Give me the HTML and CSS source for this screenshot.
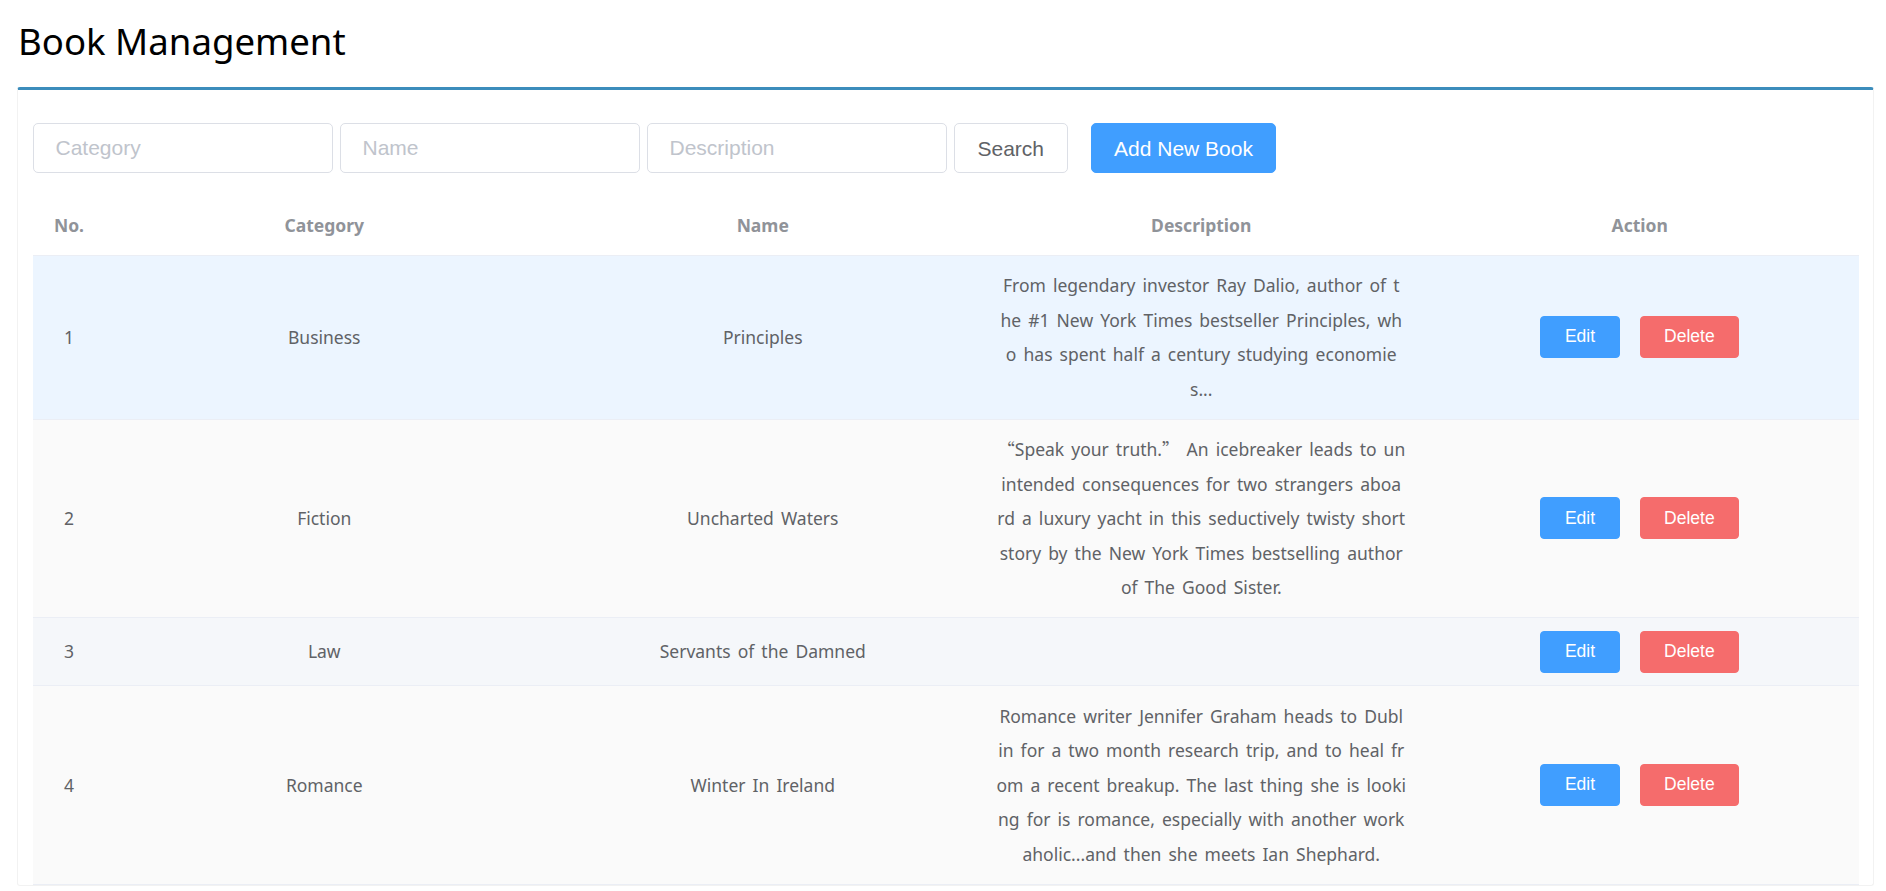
FILE: index.html
```html
<!DOCTYPE html>
<html lang="en">
<head>
<meta charset="utf-8">
<title>Book Management</title>
<link rel="stylesheet" href="styles.css">
</head>
<body>
<div class="page">
  <h1 class="title">Book Management</h1>
  <section class="card">
    <form class="toolbar" onsubmit="return false">
      <input class="field" type="text" placeholder="Category">
      <input class="field" type="text" placeholder="Name">
      <input class="field" type="text" placeholder="Description">
      <button class="btn btn-default" type="button">Search</button>
      <button class="btn btn-primary btn-add" type="button">Add New Book</button>
    </form>
    <table class="books">
      <colgroup>
        <col class="col-no">
        <col><col><col><col>
      </colgroup>
      <thead>
        <tr>
          <th>No.</th>
          <th>Category</th>
          <th>Name</th>
          <th>Description</th>
          <th>Action</th>
        </tr>
      </thead>
      <tbody>
        <tr class="row-current">
          <td>1</td>
          <td>Business</td>
          <td>Principles</td>
          <td class="desc">From legendary investor Ray Dalio, author of t<br>he #1 New York Times bestseller Principles, wh<br>o has spent half a century studying economie<br>s...</td>
          <td><div class="actions"><button class="sbtn sbtn-edit" type="button">Edit</button><button class="sbtn sbtn-del" type="button">Delete</button></div></td>
        </tr>
        <tr class="row-striped">
          <td>2</td>
          <td>Fiction</td>
          <td>Uncharted Waters</td>
          <td class="desc"><span class="cjk">“</span>Speak your truth.<span class="cjk">”</span> An icebreaker leads to un<br>intended consequences for two strangers aboa<br>rd a luxury yacht in this seductively twisty short<br>story by the New York Times bestselling author<br>of The Good Sister.</td>
          <td><div class="actions"><button class="sbtn sbtn-edit" type="button">Edit</button><button class="sbtn sbtn-del" type="button">Delete</button></div></td>
        </tr>
        <tr class="row-hover">
          <td>3</td>
          <td>Law</td>
          <td>Servants of the Damned</td>
          <td class="desc"></td>
          <td><div class="actions"><button class="sbtn sbtn-edit" type="button">Edit</button><button class="sbtn sbtn-del" type="button">Delete</button></div></td>
        </tr>
        <tr class="row-striped">
          <td>4</td>
          <td>Romance</td>
          <td>Winter In Ireland</td>
          <td class="desc">Romance writer Jennifer Graham heads to Dubl<br>in for a two month research trip, and to heal fr<br>om a recent breakup. The last thing she is looki<br>ng for is romance, especially with another work<br>aholic...and then she meets Ian Shephard.</td>
          <td><div class="actions"><button class="sbtn sbtn-edit" type="button">Edit</button><button class="sbtn sbtn-del" type="button">Delete</button></div></td>
        </tr>
      </tbody>
    </table>
  </section>
</div>
</body>
</html>
```

FILE: styles.css
```css
html, body {
  margin: 0;
  padding: 0;
  background: #ffffff;
}

.page {
  padding: 18.5px 12px 0 17px;
  font-family: "Noto Sans", "Noto Sans CJK SC", sans-serif;
}

.title {
  margin: 0 0 24.5px 1px;
  font-size: 36.6px;
  line-height: 44px;
  font-weight: 400;
  color: #000000;
}

.card {
  border: 1px solid #f2f2f2;
  border-top: 3px solid #3c8dbc;
  border-radius: 3px;
  padding: 33px 14px 0 15px;
  background: #ffffff;
}

.toolbar {
  display: flex;
  align-items: center;
  gap: 7px;
  margin: 0 0 22px 0;
}

.field {
  box-sizing: border-box;
  width: 300px;
  height: 50px;
  padding: 0 21.5px;
  border: 1px solid #dcdfe6;
  border-radius: 5px;
  font-family: "Liberation Sans", Arial, sans-serif;
  font-size: 21px;
  color: #606266;
  outline: none;
  background: #fff;
}

.field::placeholder {
  color: #c0c4cc;
}

.btn {
  box-sizing: border-box;
  height: 50px;
  padding: 0 22.5px;
  border-radius: 5px;
  border: 1px solid #dcdfe6;
  font-family: "Liberation Sans", Arial, sans-serif;
  font-size: 21px;
  line-height: 1;
  cursor: pointer;
}

.btn-default {
  background: #ffffff;
  color: #606266;
}

.btn-primary {
  background: #409eff;
  border-color: #409eff;
  color: #ffffff;
}

.btn-add {
  margin-left: 16px;
}

.books {
  width: 100%;
  table-layout: fixed;
  border-collapse: collapse;
  font-size: 17.5px;
  line-height: 34.5px;
  word-spacing: 2.5px;
  color: #606266;
}

.col-no {
  width: 72px;
}

.books th,
.books td {
  padding: 12.5px 12.5px;
  text-align: center;
  vertical-align: middle;
  border-bottom: 1px solid #ebeef5;
}

.books th {
  font-weight: 700;
  color: #909399;
  background: #ffffff;
}

.books td.desc {
  word-break: break-all;
  padding-left: 4px;
  padding-right: 4px;
}

.cjk {
  font-family: "Noto Sans CJK SC", sans-serif;
}

.row-current td {
  background: #ecf5ff;
}

.row-striped td {
  background: #fafafa;
}

.row-hover td {
  background: #f5f7fa;
}

.actions {
  display: flex;
  justify-content: center;
  gap: 20px;
  word-spacing: normal;
}

.sbtn {
  box-sizing: border-box;
  height: 42px;
  padding: 0 23.5px;
  border-radius: 4px;
  border: 1px solid transparent;
  font-family: "Liberation Sans", Arial, sans-serif;
  font-size: 17.5px;
  line-height: 1;
  color: #ffffff;
  cursor: pointer;
}

.sbtn-edit {
  background: #409eff;
  border-color: #409eff;
}

.sbtn-del {
  background: #f56c6c;
  border-color: #f56c6c;
}
```
